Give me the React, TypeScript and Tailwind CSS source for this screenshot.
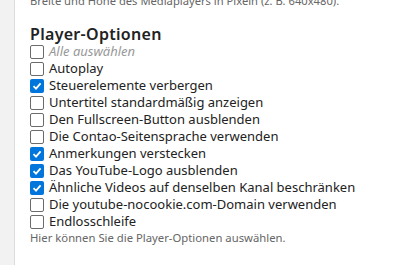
import React from 'react';

const options: { label: string; checked: boolean }[] = [
  { label: 'Autoplay', checked: false },
  { label: 'Steuerelemente verbergen', checked: true },
  { label: 'Untertitel standardmäßig anzeigen', checked: false },
  { label: 'Den Fullscreen-Button ausblenden', checked: false },
  { label: 'Die Contao-Seitensprache verwenden', checked: false },
  { label: 'Anmerkungen verstecken', checked: true },
  { label: 'Das YouTube-Logo ausblenden', checked: true },
  { label: 'Ähnliche Videos auf denselben Kanal beschränken', checked: true },
  { label: 'Die youtube-nocookie.com-Domain verwenden', checked: false },
  { label: 'Endlosschleife', checked: false },
];

const Box: React.FC<{ checked: boolean }> = ({ checked }) =>
  checked ? (
    <span className="w-[14px] h-[14px] rounded-[2px] bg-[#0075db] flex items-center justify-center shrink-0">
      <svg width="10" height="10" viewBox="0 0 10 10">
        <path d="M1.5 5.2 L4 7.6 L8.6 2.4" fill="none" stroke="white" strokeWidth="1.8" />
      </svg>
    </span>
  ) : (
    <span className="w-[14px] h-[14px] rounded-[2px] border-[1.5px] border-[#6b6b6b] bg-white shrink-0" />
  );

const App: React.FC = () => {
  return (
    <div className="w-[414px] h-[265px] overflow-hidden flex bg-white font-['Noto_Sans',sans-serif]">
      <div className="w-[15px] bg-[#f2f2f2] border-r border-[#dcdcdc] shrink-0" />
      <div className="flex-1 pl-[15px] -mt-[7px]">
        <p className="text-[11.2px] leading-[16px] text-[#666]">
          Breite und Höhe des Mediaplayers in Pixeln (z. B. 640x480).
        </p>
        <h3 className="mt-[16px] text-[16px] leading-[18px] font-semibold tracking-[0.3px] text-[#222]">
          Player-Optionen
        </h3>
        <div className="flex flex-col">
          <label className="flex items-center gap-[5px] h-[17px] text-[13px] text-[#999] italic">
            <Box checked={false} />
            Alle auswählen
          </label>
          {options.map((o) => (
            <label key={o.label} className="flex items-center gap-[5px] h-[17px] text-[13px] text-[#222]">
              <Box checked={o.checked} />
              {o.label}
            </label>
          ))}
        </div>
        <p className="text-[11.3px] leading-[16px] text-[#666]">
          Hier können Sie die Player-Optionen auswählen.
        </p>
        <h3 className="mt-[16px] text-[16px] leading-[18px] font-semibold tracking-[0.3px] text-[#222]">
          Start bei
        </h3>
      </div>
    </div>
  );
};

export default App;
